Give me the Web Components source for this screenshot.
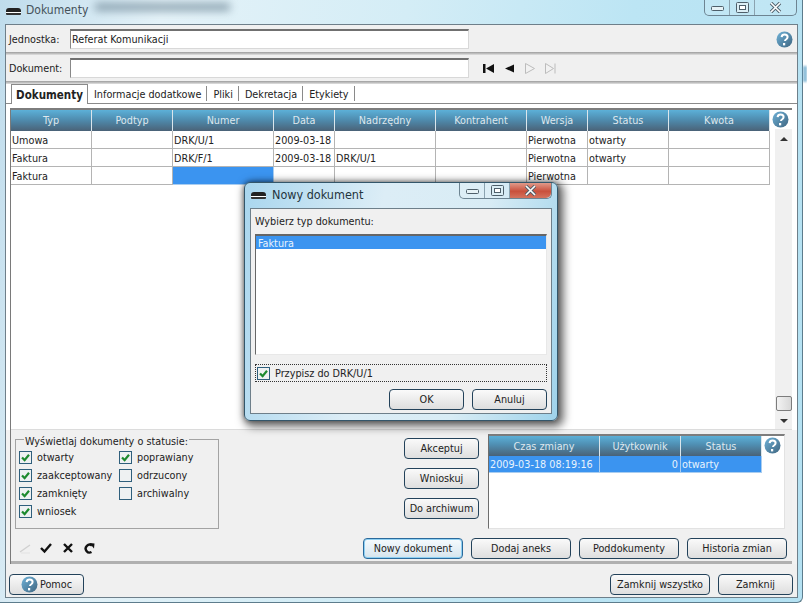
<!DOCTYPE html>
<html lang="pl">
<head>
<meta charset="utf-8">
<title>Dokumenty</title>
<style>
  html, body { margin: 0; background: #fff; }
  body { font: 10.75px "DejaVu Sans", sans-serif; font-stretch: condensed; color: #222; }
</style>
</head>
<body>
<dok-app></dok-app>
<script>
const FONT = `font: 10.75px "DejaVu Sans", sans-serif; font-stretch: condensed;`

class HelpIcon extends HTMLElement {
  connectedCallback() {
    const id = 'g' + Math.random().toString(36).slice(2)
    this.attachShadow({mode: 'open'}).innerHTML = `
      <style>:host{display:block;width:17px;height:17px;flex:none} svg{display:block}</style>
      <svg width="17" height="17" viewBox="0 0 17 17">
        <defs><linearGradient id="${id}" x1="0" y1="0" x2="1" y2="1">
          <stop offset="0" stop-color="#6fb2d8"/><stop offset="1" stop-color="#3f6580"/>
        </linearGradient></defs>
        <circle cx="8.5" cy="8.5" r="8" fill="url(#${id})"/>
        <path d="M5.6 6.2c.2-1.8 1.4-2.6 3-2.6 1.7 0 3 1 3 2.5 0 1.3-.8 1.9-1.6 2.4-.7.4-1 .8-1 1.6" fill="none" stroke="#fff" stroke-width="2"/>
        <rect x="7" y="12" width="2.2" height="2.4" fill="#fff"/>
      </svg>`
  }
}

class CaptionButtons extends HTMLElement {
  connectedCallback() {
    this.attachShadow({mode: 'open'}).innerHTML = `
      <style>
        :host{display:flex;height:15px;border:1px solid #6d8492;border-top:0;border-radius:0 0 5px 5px;background:rgba(255,255,255,.12)}
        div{display:flex;align-items:center;justify-content:center;border-right:1px solid #8ba3b0}
        div:last-child{border-right:0}
        .min,.max{width:24px}.cls{width:41px}
        :host([active]) .cls{background:linear-gradient(#e09a8a,#c9503c 55%,#d4735e);border-radius:0 0 5px 0}
        svg{display:block}
      </style>
      <div class="min"><svg width="13" height="9"><rect x=".5" y="3.5" width="12" height="4" rx="1" fill="#e6f2f6" stroke="#4e5f6a"/></svg></div>
      <div class="max"><svg width="13" height="11"><rect x=".5" y=".5" width="12" height="10" rx="1" fill="#dbeef5" stroke="#4e5f6a"/><rect x="3.5" y="3.5" width="6" height="4" fill="#fff" stroke="#4e5f6a"/></svg></div>
      <div class="cls"><svg width="13" height="11"><path d="M2 1l9 9M11 1l-9 9" stroke="#4e5f6a" stroke-width="3.4"/><path d="M2 1l9 9M11 1l-9 9" stroke="#fff" stroke-width="1.6"/></svg></div>`
  }
}

// okno w stylu Aero, tytul z atrybutu, zawartosc w slocie
class AeroWindow extends HTMLElement {
  connectedCallback() {
    const dialog = this.hasAttribute('dialog')
    this.attachShadow({mode: 'open'}).innerHTML = `
      <style>
        :host{display:flex;flex-direction:column;box-sizing:border-box;width:803px;height:603px;position:relative;
          background:linear-gradient(100deg,#bfdcec 0,#e4f2f8 18%,#d4edf6 45%,#bce5f4 70%,#b4e1f2 100%);
          border-right:1px solid #5d7c8c;border-bottom:1px solid #5d7c8c;border-radius:0 0 6px 0;overflow:hidden}
        :host([dialog]){width:314px;height:239px;border:1px solid #33566a;border-radius:6px;overflow:visible;
          background:linear-gradient(100deg,#a9d6ee,#dcedf6 40%,#d8ecf5 70%,#9fd3eb);
          box-shadow:3px 3px 9px 3px rgba(0,0,0,.55),0 0 5px rgba(0,0,0,.4)}
        .bar{display:flex;align-items:flex-start;height:24px;flex:none;position:relative}
        :host([dialog]) .bar{height:25px}
        .smear{position:absolute;left:95px;top:3px;width:135px;height:8px;background:#6b8494;filter:blur(4px);opacity:.7}
        .ico{width:15px;height:7px;background:linear-gradient(#222 0 60%,#fff 60% 72%,#333 72%);border-radius:3px 3px 1px 1px;margin:8px 0 0 6px}
        :host([dialog]) .ico{margin:9px 0 0 6px}
        .ttl{margin:3px 0 0 5px;font:12px/15px "DejaVu Sans",sans-serif;font-stretch:condensed;color:#45525a}
        :host([dialog]) .ttl{margin:4px 0 0 6px;font-size:12.5px;color:#24343d}
        ui-caption{margin-left:auto;margin-right:5px}
        .body{flex:1;min-height:0;display:flex;flex-direction:column;margin:0 4px 4px 5px;border:1px solid #6e7f8a;background:#f0f0f0}
        :host([dialog]) .body{margin:0 5px 6px 5px}
      </style>
      <div class="bar">
        ${dialog ? '' : '<div class="smear"></div>'}
        <div class="ico"></div><div class="ttl">${this.getAttribute('title-text')}</div>
        <ui-caption ${dialog ? 'active' : ''}></ui-caption>
      </div>
      <div class="body"><slot></slot></div>`
  }
}

class PushButton extends HTMLElement {
  connectedCallback() {
    this.attachShadow({mode: 'open'}).innerHTML = `
      <style>
        :host{display:inline-flex;align-items:center;justify-content:center;box-sizing:border-box;height:21px;width:100px;
          border:1px solid #23425a;border-radius:4px;background:linear-gradient(#fafafa,#ececec 50%,#dedede);${FONT}color:#222}
        :host([primary]){border-color:#2a6a9c;box-shadow:inset 0 0 0 1px #8fd0f2;background:linear-gradient(#f6fbfe,#e6f0f6 50%,#d6e4ec)}
      </style><slot></slot>`
  }
}

class CheckBox extends HTMLElement {
  connectedCallback() {
    const tick = this.hasAttribute('checked')
      ? '<path d="M3 6.5l2.6 2.6L10 3.8" fill="none" stroke="#1d8a2e" stroke-width="2.2"/>' : ''
    this.attachShadow({mode: 'open'}).innerHTML = `
      <style>
        :host{display:flex;align-items:center;gap:5px;height:18px;${FONT}color:#222}
        svg{display:block;flex:none}
      </style>
      <svg width="13" height="13"><rect x=".5" y=".5" width="12" height="12" fill="#eef1f2" stroke="#2f5f7c"/>${tick}</svg>
      <slot></slot>`
  }
}

class TabStrip extends HTMLElement {
  connectedCallback() {
    const tabs = this.getAttribute('tabs').split('|')
    this.attachShadow({mode: 'open'}).innerHTML = `
      <style>
        :host{display:flex;align-items:flex-end;height:20px;box-sizing:border-box;padding-left:5px;background:#fff;border-bottom:1px solid #8a8a8a;${FONT}color:#222;flex:none}
        div{height:15px;line-height:18px;padding:0 5px 0 6px;border-right:1px solid #8a8a8a;margin-bottom:2px}
        div.on{box-sizing:border-box;height:20px;line-height:21px;font-weight:bold;font-size:11.5px;padding:0;width:77px;border:1px solid #8a8a8a;border-bottom:0;margin-bottom:-1px;background:#fff;text-align:center}
      </style>
      ${tabs.map((t, i) => `<div class="${i ? '' : 'on'}">${t}</div>`).join('')}`
  }
}

// tabela: kolumny "nazwa:szerokosc", wiersze jako JSON w atrybucie rows
class DataGrid extends HTMLElement {
  connectedCallback() {
    const cols = this.getAttribute('cols').split('|').map(c => c.split(':'))
    const rows = JSON.parse(this.getAttribute('rows'))
    const tracks = cols.map(c => c[1] + 'px').join(' ')
    const rowH = Number(this.getAttribute('row-height') || 18)
    const headH = this.getAttribute('head-height') || 21
    const lineH = this.getAttribute('line-height') || rowH
    const head = cols.map(c => `<div class="h">${c[0]}</div>`).join('')
    const body = rows.map(r => r.map((v, i) => {
      const sel = String(v).startsWith('*')
      const text = sel ? v.slice(1) : v
      const right = cols[i][2] === 'r' ? ' r' : ''
      return `<div class="c${sel ? ' sel' : ''}${right}">${text}</div>`
    }).join('')).join('')
    this.attachShadow({mode: 'open'}).innerHTML = `
      <style>
        :host{display:flex;box-sizing:border-box;background:#fff;border-top:2px solid #7d7d7d;min-height:0;${FONT}color:#222}
        :host([framed]){border-left:1px solid #6d6d6d}
        .t{display:grid;grid-template-columns:${tracks};grid-auto-rows:${rowH}px;grid-template-rows:${headH}px;align-content:start;flex:none}
        .h{display:flex;align-items:center;justify-content:center;box-sizing:border-box;border-right:1px solid #dbe6ec;
          background:linear-gradient(#5cb0d8,#4f8db0 45%,#4a6277);color:#dfe8ee}
        .c{box-sizing:border-box;padding-left:1px;line-height:${lineH}px;white-space:nowrap;overflow:hidden;border-right:1px solid #b4b4b4;border-bottom:1px solid #b4b4b4}
        .c.sel{background:#3b94f0;color:#e8f3fd;border-color:#a9cdf0}
        .c.r{text-align:right;padding-right:2px}
        .side{flex:1;display:flex;flex-direction:column;min-width:0}
        help-icon{margin:1px 0 0 2px}
        .sb{flex:1;margin:1px 0 0 5px;width:17px;background:#f0f0f0;display:flex;flex-direction:column;align-items:center;padding:8px 0 6px}
        .arr{width:0;height:0;border:4px solid transparent}
        .up{border-bottom-color:#333;border-top:0}
        .dn{border-top-color:#333;border-bottom:0}
        .thumb{margin-top:auto;margin-bottom:8px;width:16px;height:15px;box-sizing:border-box;border:1px solid #7c7c7c;border-radius:2px;background:linear-gradient(90deg,#f3f3f3,#d8d8d8)}
      </style>
      <div class="t">${head}${body}</div>
      <div class="side"><help-icon></help-icon>
        ${this.hasAttribute('scroll') ? '<div class="sb"><div class="arr up"></div><div class="thumb"></div><div class="arr dn"></div></div>' : ''}
      </div>`
  }
}

class FieldRow extends HTMLElement {
  connectedCallback() {
    const h = Number(this.getAttribute('height') || 29)
    this.attachShadow({mode: 'open'}).innerHTML = `
      <style>
        :host{display:flex;align-items:center;box-sizing:border-box;height:${h}px;padding:${h - 29}px 4px 3px 3px;flex:none;
          background:linear-gradient(#f0f0f0 0 ${h - 3}px,#9d9d9d ${h - 3}px,#c8c8c8 ${h - 1}px,#e4e4e4 ${h}px);${FONT}color:#222}
        .l{width:61px;flex:none}
        .v{box-sizing:border-box;width:399px;height:20px;flex:none;background:#fff;border:1px solid #d8d8d8;border-top:2px solid #707070;border-left:1px solid #888;padding-left:1px;line-height:17px}
        .r{flex:1;display:flex;align-items:center;justify-content:space-between;padding-left:14px}
      </style>
      <div class="l">${this.getAttribute('label')}</div>
      <div class="v">${this.getAttribute('value') || ''}</div>
      <div class="r"><slot></slot></div>`
  }
}

class RecordNav extends HTMLElement {
  connectedCallback() {
    this.attachShadow({mode: 'open'}).innerHTML = `
      <style>:host{display:block;height:11px} svg{display:block}</style>
      <svg width="74" height="11" viewBox="0 0 74 11">
        <path d="M0 1h2.500v9H0zM11 1v9L3 5.500z" fill="#111"/>
        <path d="M31 1.500v8L22 5.500z" fill="#111"/>
        <path d="M42.500 .5v10l9-5z" fill="#f2f2f2" stroke="#bcbcbc"/>
        <path d="M62.500 .5v10l8-5zM72 .5v10" fill="#f2f2f2" stroke="#bcbcbc"/>
      </svg>`
  }
}

class RowTools extends HTMLElement {
  connectedCallback() {
    this.attachShadow({mode: 'open'}).innerHTML = `
      <style>:host{display:block;height:12px;flex:none;margin-bottom:2px} svg{display:block}</style>
      <svg width="82" height="12" viewBox="0 0 82 12">
        <path d="M1 10L11 3" stroke="#d0d0d0" stroke-width="1.4"/><path d="M2 11h9" stroke="#e2e2e2"/>
        <path d="M22 6l3.500 3.500L32 2" fill="none" stroke="#111" stroke-width="2.400"/>
        <path d="M45 2l8 8M53 2l-8 8" stroke="#111" stroke-width="2.400"/>
        <path d="M72.500 10a3.900 3.900 0 1 1 .5-6.500" fill="none" stroke="#111" stroke-width="2.400"/><path d="M70.500 1l5 .5-.5 5z" fill="#111"/>
      </svg>`
  }
}

class StatusGroup extends HTMLElement {
  connectedCallback() {
    this.attachShadow({mode: 'open'}).innerHTML = `
      <style>
        :host{display:block;width:204px;flex:none;${FONT}color:#222}
        fieldset{box-sizing:border-box;height:98px;margin:0;padding:0 0 0 3px;border:1px solid #a3a3a3;display:grid;grid-template-columns:100px 1fr;grid-auto-rows:18px}
        legend{padding:4px 1px 0;margin-left:5px;line-height:13px}
      </style>
      <fieldset><legend>${this.getAttribute('legend')}</legend><slot></slot></fieldset>`
  }
}

class NewDocDialog extends HTMLElement {
  connectedCallback() {
    this.attachShadow({mode: 'open'}).innerHTML = `
      <style>
        :host{position:absolute;left:244px;top:182px;display:block;${FONT}color:#222}
        .in{display:flex;flex-direction:column;flex:1;padding:0 4px 0 4px;height:204px;box-sizing:border-box}
        .lb{height:25px;line-height:25px}
        .list{box-sizing:border-box;height:121px;background:#fff;border-top:2px solid #666;border-left:1px solid #666;border-right:1px solid #e8e8e8;border-bottom:1px solid #e8e8e8}
        .sel{height:13px;line-height:15px;background:#3b94f0;color:#e8f3fd;padding-left:2px}
        .chk{box-sizing:border-box;margin-top:9px;height:18px;border:1px dotted #333;padding-left:1px;width:292px;display:flex;align-items:center}
        .act{display:flex;justify-content:flex-end;gap:8px;margin-top:7px;width:292px}
        push-button{width:75px}
      </style>
      <ui-window dialog title-text="Nowy dokument">
        <div class="in">
          <div class="lb">Wybierz typ dokumentu:</div>
          <div class="list"><div class="sel">Faktura</div></div>
          <div class="chk"><check-box checked>Przypisz do DRK/U/1</check-box></div>
          <div class="act"><push-button>OK</push-button><push-button>Anuluj</push-button></div>
        </div>
      </ui-window>`
  }
}

class DokApp extends HTMLElement {
  connectedCallback() {
    const docCols = 'Typ:81|Podtyp:81|Numer:101|Data:61|Nadrzędny:101|Kontrahent:91|Wersja:61|Status:81|Kwota:101'
    const docRows = [
      ['Umowa', '', 'DRK/U/1', '2009-03-18', '', '', 'Pierwotna', 'otwarty', ''],
      ['Faktura', '', 'DRK/F/1', '2009-03-18', 'DRK/U/1', '', 'Pierwotna', 'otwarty', ''],
      ['Faktura', '', '*', '', '', '', 'Pierwotna', '', ''],
    ]
    const histCols = 'Czas zmiany:111|Użytkownik:81:r|Status:81'
    const histRows = [['*2009-03-18 08:19:16', '*0', '*otwarty']]
    const attr = v => JSON.stringify(v).replace(/"/g, '&quot;')
    this.attachShadow({mode: 'open'}).innerHTML = `
      <style>
        :host{display:block;position:relative;width:807px;height:607px;overflow:hidden;${FONT}}
        .main{flex:1;min-height:0;display:flex;flex-direction:column;background:linear-gradient(#fff 346px,#f2f2f2 346px)}
        .panel{flex:1;min-height:0;display:flex;flex-direction:column;margin:4px 5px 0 4px;background:#f0f0f0;border-left:1px solid #7a7a7a}
        .docs{flex:1;min-height:0}
        .low{display:flex;flex:none;height:105px;padding:1px 0 0 4px;border-top:1px solid #dcdcdc;box-sizing:border-box}
        .acts{margin-left:185px;display:flex;flex-direction:column;gap:9px;padding-top:7px;flex:none}
        .acts push-button{width:75px}
        .hist{margin:3px 0 0 9px;width:297px;height:95px;flex:none;border-right:1px solid #e2e2e2;border-bottom:1px solid #e2e2e2}
        .tool{display:flex;align-items:center;flex:none;height:30px;padding:2px 5px 0 8px;box-sizing:border-box;border-bottom:3px solid #b0b0b0}
        .tool .bt{margin-left:auto;display:flex;gap:8px}
        .foot{display:flex;align-items:flex-start;flex:none;height:33px;padding:10px 4px 0 3px;box-sizing:border-box;background:#f0f0f0}
        .foot push-button{width:75px}
        .foot .sp{flex:1}
        .pom-in{display:flex;align-items:center;gap:2px;padding-left:11px;width:100%}
        .foot .wide{width:100px;margin-right:8px}
        .edge{position:absolute;right:0;top:66px;width:4px;height:16px;background:#5aa0c8;filter:blur(1px);opacity:.7}
      </style>
      <ui-window title-text="Dokumenty">
        <field-row height="30" label="Jednostka:" value="Referat Komunikacji"><span></span><help-icon></help-icon></field-row>
        <field-row label="Dokument:"><record-nav></record-nav></field-row>
        <div class="main">
          <tab-strip tabs="Dokumenty|Informacje dodatkowe|Pliki|Dekretacja|Etykiety"></tab-strip>
          <div class="panel">
            <data-grid class="docs" scroll line-height="19" cols="${docCols}" rows="${attr(docRows)}"></data-grid>
            <div class="low">
              <status-group legend="Wyświetlaj dokumenty o statusie:">
                <check-box checked>otwarty</check-box><check-box checked>poprawiany</check-box>
                <check-box checked>zaakceptowany</check-box><check-box>odrzucony</check-box>
                <check-box checked>zamknięty</check-box><check-box>archiwalny</check-box>
                <check-box checked>wniosek</check-box>
              </status-group>
              <div class="acts"><push-button>Akceptuj</push-button><push-button>Wnioskuj</push-button><push-button>Do archiwum</push-button></div>
              <data-grid class="hist" framed head-height="20" row-height="17" cols="${histCols}" rows="${attr(histRows)}"></data-grid>
            </div>
            <div class="tool">
              <row-tools></row-tools>
              <div class="bt"><push-button primary>Nowy dokument</push-button><push-button>Dodaj aneks</push-button><push-button>Poddokumenty</push-button><push-button>Historia zmian</push-button></div>
            </div>
          </div>
          <div class="foot">
            <push-button><span class="pom-in"><help-icon></help-icon>Pomoc</span></push-button>
            <span class="sp"></span>
            <push-button class="wide">Zamknij wszystko</push-button><push-button>Zamknij</push-button>
          </div>
        </div>
      </ui-window>
      <new-doc-dialog></new-doc-dialog>
      <div class="edge"></div>`
  }
}

window.customElements.define('help-icon', HelpIcon)
window.customElements.define('ui-caption', CaptionButtons)
window.customElements.define('ui-window', AeroWindow)
window.customElements.define('push-button', PushButton)
window.customElements.define('check-box', CheckBox)
window.customElements.define('tab-strip', TabStrip)
window.customElements.define('data-grid', DataGrid)
window.customElements.define('field-row', FieldRow)
window.customElements.define('record-nav', RecordNav)
window.customElements.define('row-tools', RowTools)
window.customElements.define('status-group', StatusGroup)
window.customElements.define('new-doc-dialog', NewDocDialog)
window.customElements.define('dok-app', DokApp)
</script>
</body>
</html>
